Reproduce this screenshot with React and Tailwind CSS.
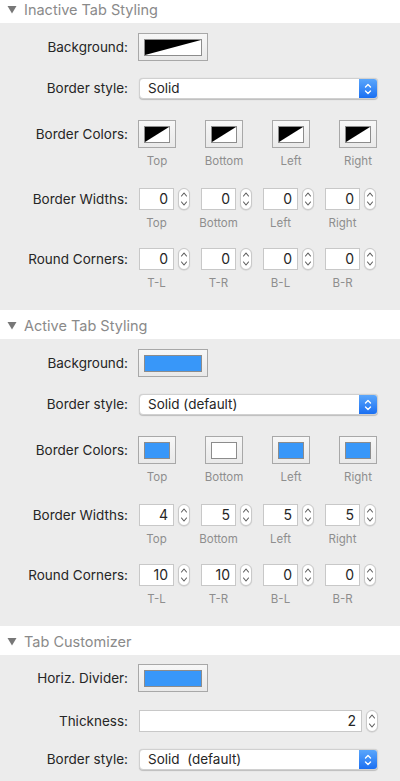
import React from 'react';

// Inspector panel for tab styling: collapsible sections with colour wells,
// popup selects and numeric steppers in the classic macOS look.

const BLUE = '#3897f9';

const NoColor = () => (
  <svg viewBox="0 0 100 100" preserveAspectRatio="none" className="w-full h-full block">
    <rect width="100" height="100" fill="#fff" />
    <polygon points="0,0 100,0 0,100" fill="#000" />
  </svg>
);

const Swatch = ({ color }) =>
  color === 'none' ? <NoColor /> : <div className="w-full h-full" style={{ background: color }} />;

const ColorWell = ({ color, wide }) => (
  <div
    className={`${wide ? 'w-[70px]' : 'w-[38px]'} h-[28px] border border-[#a8a8a8] bg-gradient-to-b from-[#f7f7f7] to-[#e9e9e9] flex items-center justify-center shrink-0`}
  >
    <div className={`${wide ? 'w-[58px]' : 'w-[26px]'} h-[17px] border border-[#8c8c8c] bg-white`}>
      <Swatch color={color} />
    </div>
  </div>
);

const Stepper = () => (
  <div className="w-[12px] h-[22px] rounded-full border border-[#c9c9c9] bg-white shadow-[0_0.5px_1px_rgba(0,0,0,0.15)] flex items-center justify-center shrink-0">
    <svg width="8" height="18" viewBox="0 0 8 18" fill="none" stroke="#5c5c5c" strokeWidth="1.1" strokeLinecap="round" strokeLinejoin="round">
      <path d="M1.5 6 L4 3 L6.5 6" />
      <path d="M1.5 12 L4 15 L6.5 12" />
    </svg>
  </div>
);

const NumField = ({ value, className = 'w-[35px]' }) => (
  <div
    className={`${className} h-[22px] bg-white border border-[#c8c8c8] text-right pr-[5px] text-[14px] leading-[20px] text-[#262626] shrink-0`}
  >
    {value}
  </div>
);

const Select = ({ value }) => (
  <div className="ml-px w-[239px] h-[21px] flex rounded-[4px] bg-white border border-[#d0d0d0] shadow-[0_0.5px_1px_rgba(0,0,0,0.2)] overflow-hidden">
    <div className="flex-1 pl-[8px] text-[13.5px] leading-[19px] text-[#262626] whitespace-pre">{value}</div>
    <div className="w-[18px] h-full bg-gradient-to-b from-[#5aa6fb] to-[#1a6ff2] flex items-center justify-center">
      <svg width="8" height="14" viewBox="0 0 8 14" fill="none" stroke="#fff" strokeWidth="1.4" strokeLinecap="round" strokeLinejoin="round">
        <path d="M1.5 5 L4 2.5 L6.5 5" />
        <path d="M1.5 9 L4 11.5 L6.5 9" />
      </svg>
    </div>
  </div>
);

const Label = ({ children }) => (
  <div className="w-[128px] shrink-0 text-right text-[13.5px] text-[#262626] whitespace-nowrap">{children}</div>
);

const Caption = ({ children, className }) => (
  <div className={`${className} mt-[6px] h-[14px] flex justify-center text-[11.5px] leading-[14px] text-[#8e8e8e] whitespace-nowrap`}>
    {children}
  </div>
);

const Header = ({ title, first }) => (
  <div className={`${first ? 'h-[23px]' : 'h-[29px]'} bg-white flex items-end pb-[4px] pl-[7px] gap-[7px]`}>
    <svg width="10" height="18" viewBox="0 0 10 18" className="shrink-0">
      <polygon points="0.5,5 9.5,5 5,12.5" fill="#777" />
    </svg>
    <span className="text-[14.5px] leading-[18px] text-[#8a8a8a]">{title}</span>
  </div>
);

const WellRow = ({ label, colors }) => (
  <div className="flex items-start mt-[21px]">
    <div className="h-[28px] flex items-center">
      <Label>{label}</Label>
    </div>
    <div className="ml-[10px] flex gap-[29px]">
      {colors.map(([c, cap]) => (
        <div key={cap} className="flex flex-col">
          <ColorWell color={c} />
          <Caption className="w-[38px]">{cap}</Caption>
        </div>
      ))}
    </div>
  </div>
);

const FieldRow = ({ label, values, caps, top }) => (
  <div className={`flex items-start ${top}`}>
    <div className="h-[22px] flex items-center">
      <Label>{label}</Label>
    </div>
    <div className="ml-[11px] flex gap-[12px]">
      {values.map((v, i) => (
        <div key={i} className="flex flex-col w-[50px]">
          <div className="flex gap-[4px]">
            <NumField value={v} />
            <Stepper />
          </div>
          <Caption className="w-[35px]">{caps[i]}</Caption>
        </div>
      ))}
    </div>
  </div>
);

const TabStyling = ({ title, first, bg, border, colors, widths, corners }) => (
  <>
    <Header title={title} first={first} />
    <div className="bg-[#ececec] pt-[10px] pb-[20px]">
      <div className="flex items-center h-[28px]">
        <Label>Background:</Label>
        <div className="ml-[10px]">
          <ColorWell color={bg} wide />
        </div>
      </div>
      <div className="flex items-center h-[21px] mt-[17px]">
        <Label>Border style:</Label>
        <div className="ml-[10px]">
          <Select value={border} />
        </div>
      </div>
      <WellRow label="Border Colors:" colors={colors} />
      <FieldRow label="Border Widths:" values={widths} caps={['Top', 'Bottom', 'Left', 'Right']} top="mt-[20px]" />
      <FieldRow label="Round Corners:" values={corners} caps={['T-L', 'T-R', 'B-L', 'B-R']} top="mt-[18px]" />
    </div>
  </>
);

export default function App() {
  return (
    <div className="w-[400px] h-[781px] overflow-hidden bg-[#ececec] font-[family-name:Inter,'Liberation_Sans',sans-serif] antialiased">
      <TabStyling
        first
        title="Inactive Tab Styling"
        bg="none"
        border="Solid"
        colors={[['none', 'Top'], ['none', 'Bottom'], ['none', 'Left'], ['none', 'Right']]}
        widths={[0, 0, 0, 0]}
        corners={[0, 0, 0, 0]}
      />
      <TabStyling
        title="Active Tab Styling"
        bg={BLUE}
        border="Solid (default)"
        colors={[[BLUE, 'Top'], ['#fff', 'Bottom'], [BLUE, 'Left'], [BLUE, 'Right']]}
        widths={[4, 5, 5, 5]}
        corners={[10, 10, 0, 0]}
      />

      <Header title="Tab Customizer" />
      <div className="bg-[#ececec] pt-[9px]">
        <div className="flex items-center h-[28px]">
          <Label>Horiz. Divider:</Label>
          <div className="ml-[10px]">
            <ColorWell color={BLUE} wide />
          </div>
        </div>
        <div className="flex items-center mt-[18px]">
          <Label>Thickness:</Label>
          <div className="ml-[11px] flex gap-[4px]">
            <NumField value={2} className="w-[223px]" />
            <Stepper />
          </div>
        </div>
        <div className="flex items-center h-[21px] mt-[17px]">
          <Label>Border style:</Label>
          <div className="ml-[10px]">
            <Select value="Solid  (default)" />
          </div>
        </div>
      </div>
    </div>
  );
}
